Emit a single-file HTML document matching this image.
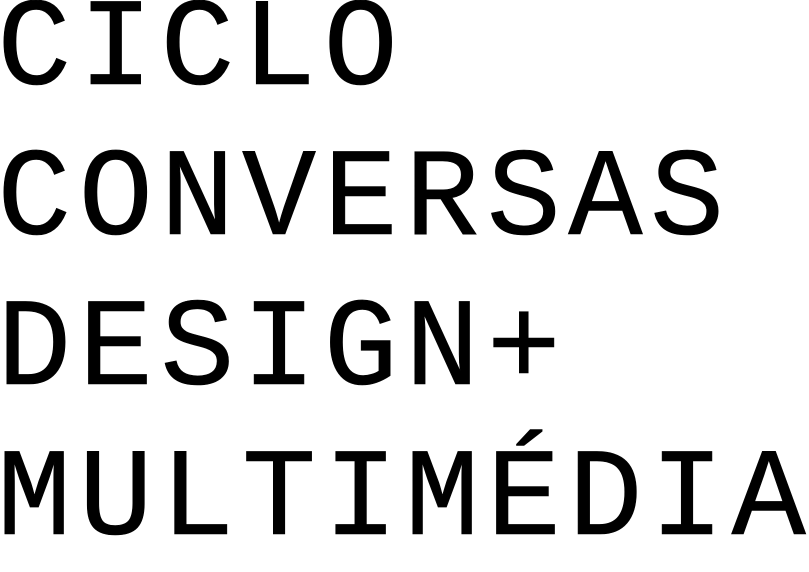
<!DOCTYPE html>
<html><head><meta charset="utf-8"><style>
html,body{margin:0;padding:0;background:#fff;width:809px;height:540px;overflow:hidden}
.l{position:absolute;left:-3px;font-family:"Liberation Mono",monospace;font-size:124px;line-height:124px;height:124px;letter-spacing:7.2px;color:#000;white-space:pre;transform:scaleY(1.01);transform-origin:0 95.3px;-webkit-text-stroke:0.6px #000}
</style></head><body>
<div class="l" style="top:-10.3px">CICLO</div>
<div class="l" style="top:139.7px">CONVERSAS</div>
<div class="l" style="top:289.7px">DESIGN+</div>
<div class="l" style="top:439.7px">MULTIMÉDIA</div>
</body></html>
